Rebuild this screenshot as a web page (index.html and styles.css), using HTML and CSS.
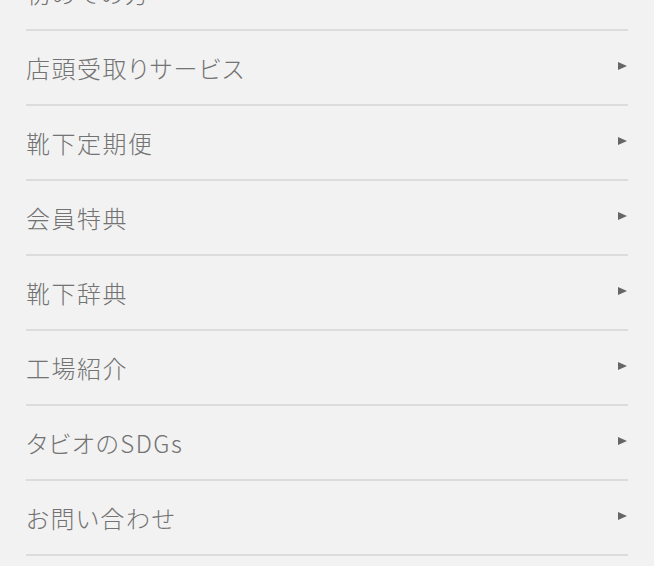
FILE: index.html
```html
<!DOCTYPE html>
<html lang="ja">
<head>
    <meta charset="UTF-8">
    <meta name="viewport" content="width=device-width, initial-scale=1.0">
    <title>メニュー</title>
    <link rel="stylesheet" href="styles.css">
</head>
<body>

    <nav class="menu">
        <ul class="menu-list">
            <li class="menu-item"><a href="#" class="menu-link"><span class="menu-label">初めての方</span><span class="menu-arrow"></span></a></li>
            <li class="menu-item"><a href="#" class="menu-link"><span class="menu-label">店頭受取りサービス</span><span class="menu-arrow"></span></a></li>
            <li class="menu-item"><a href="#" class="menu-link"><span class="menu-label">靴下定期便</span><span class="menu-arrow"></span></a></li>
            <li class="menu-item"><a href="#" class="menu-link"><span class="menu-label">会員特典</span><span class="menu-arrow"></span></a></li>
            <li class="menu-item"><a href="#" class="menu-link"><span class="menu-label">靴下辞典</span><span class="menu-arrow"></span></a></li>
            <li class="menu-item"><a href="#" class="menu-link"><span class="menu-label">工場紹介</span><span class="menu-arrow"></span></a></li>
            <li class="menu-item"><a href="#" class="menu-link"><span class="menu-label">タビオのSDGs</span><span class="menu-arrow"></span></a></li>
            <li class="menu-item"><a href="#" class="menu-link"><span class="menu-label">お問い合わせ</span><span class="menu-arrow"></span></a></li>
        </ul>
    </nav>

</body>
</html>
```

FILE: styles.css
```css
/* --- Base --- */
body {
    margin: 0;
    padding: 0;
    background-color: #f2f2f2;
    font-family: "Noto Sans CJK JP", "Noto Sans", sans-serif;
    color: #737373;
}

/* --- Menu --- */
.menu {
    padding: 0 26px;
    margin-top: -44px; /* list is scrolled, first row partly out of view */
}

.menu-list {
    list-style: none;
    margin: 0;
    padding: 0;
}

.menu-item {
    border-bottom: 2px solid #dcdcdc;
}

.menu-link {
    display: flex;
    justify-content: space-between;
    align-items: center;
    height: 73px;
    color: inherit;
    text-decoration: none;
}

.menu-label {
    font-size: 24px;
    font-weight: 300;
    letter-spacing: 1.5px;
    line-height: 1;
    font-feature-settings: "palt";
}

.menu-arrow {
    width: 0;
    height: 0;
    margin-right: 1px;
    margin-bottom: 4px;
    border-top: 4px solid transparent;
    border-bottom: 4px solid transparent;
    border-left: 9px solid #666666;
}
```
